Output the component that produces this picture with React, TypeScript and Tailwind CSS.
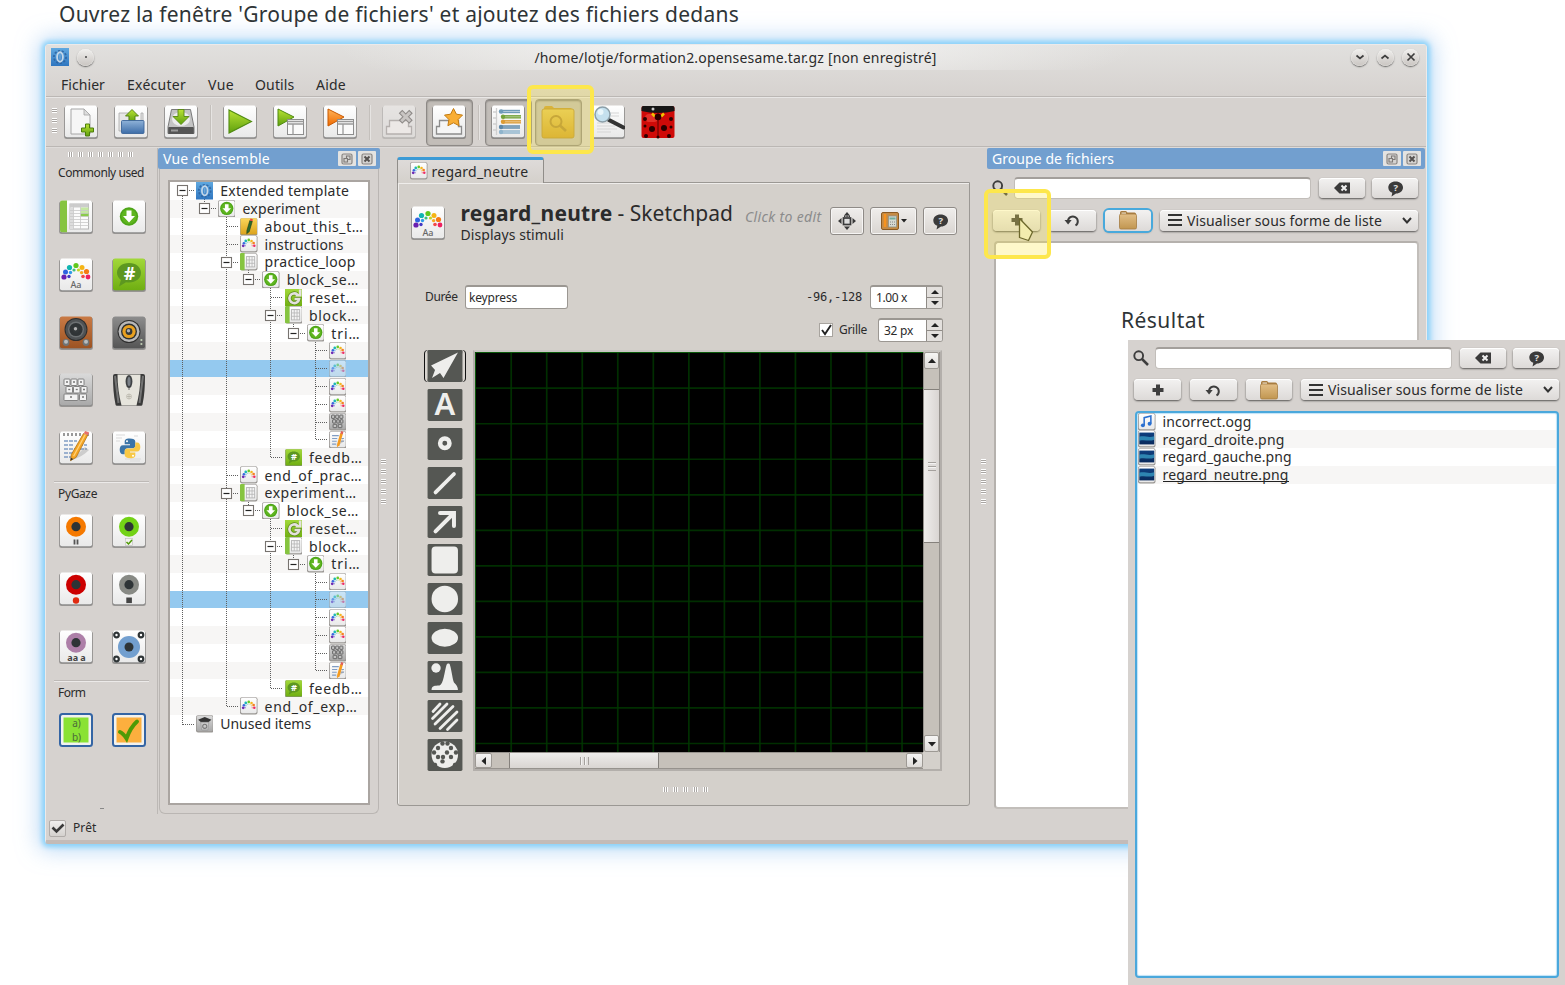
import React from "react";

/* ---------- shared gradients ---------- */

function Gradients() {
  const g = (id: string, a: string, b: string) => (
    <linearGradient id={id} x1="0" y1="0" x2="0" y2="1">
      <stop offset="0" stopColor={a} />
      <stop offset="1" stopColor={b} />
    </linearGradient>
  );
  return (
    <svg className="absolute h-0 w-0" aria-hidden="true">
      <defs>
        {g("tile", "#ffffff", "#e9e9e9")}
        {g("green", "#b9e334", "#5fa00e")}
        {g("lime", "#a2d83a", "#6fae12")}
        {g("orange", "#ffb35a", "#ef6a00")}
        {g("folder", "#e2be86", "#c19650")}
        {g("blue", "#8fb2d8", "#3d6da8")}
        {g("wood", "#c97a45", "#9c5322")}
        {g("metal", "#8d8d8d", "#555555")}
        {g("keys", "#dadada", "#a9a9a9")}
        {g("yfold", "#e3c557", "#cfa02a")}
        {g("azure", "#5fa8e0", "#2f76c0")}
        {g("photo", "#0f3f7f", "#0a2a5c")}
        {g("note", "#fbd65a", "#dba21c")}
      </defs>
    </svg>
  );
}

type IconProps = { className?: string; children?: React.ReactNode };

function Icon({ className = "h-[34px] w-[34px]", children }: IconProps) {
  return (
    <svg viewBox="0 0 34 34" className={"shrink-0 " + className}>
      {children}
    </svg>
  );
}

function Base({ fill = "url(#tile)", small }: { fill?: string; small?: boolean }) {
  if (small) {
    return (
      <>
        <rect x="0" y="0.5" width="34" height="33.5" rx="4" fill="#9a9794" />
        <rect x="1.6" y="1.4" width="30.8" height="30" rx="3" fill={fill} />
      </>
    );
  }
  return (
    <>
      <rect x="0.1" y="1.2" width="33.8" height="32.8" rx="2.5" fill="#000" opacity="0.28" />
      <rect x="0.7" y="1" width="32.6" height="32.2" rx="2" fill="#8b8b8b" />
      <rect x="1" y="0.6" width="32" height="31.6" rx="2" fill={fill} />
    </>
  );
}

/* ---------- item icons ---------- */

const dots: [number, number, number, string][] = [
  [5, 19, 2.6, "#6a1fb0"], [6.5, 14, 2.5, "#2f62e0"], [10.5, 9.5, 2.6, "#10b5b0"],
  [17, 7.5, 2.6, "#62c81c"], [23, 9.5, 2.5, "#f5b414"], [27.5, 13.5, 2.6, "#f57a14"],
  [29, 19, 2.4, "#ee2060"], [10, 18.5, 1.7, "#4238c4"], [11.5, 14.5, 1.7, "#2f9be8"],
  [15, 12, 1.6, "#3fc080"], [19.5, 12, 1.6, "#c6d420"], [22.6, 14.6, 1.7, "#f8a820"],
  [24, 18.5, 1.8, "#f04848"],
];

function Sketch({ className, small, faded }: { className?: string; small?: boolean; faded?: boolean }) {
  return (
    <Icon className={className}>
      <Base small={small} />
      {small ? (
        <g opacity="0.95">
          {dots.slice(0, 7).map(([x, y, r, c], i) => (
            <circle key={i} cx={x + (17 - x) * 0.1} cy={y + 2} r={r} fill={c} />
          ))}
          {dots.slice(7).map(([x, y, r, c], i) => (
            <circle key={i} cx={x} cy={y + 2} r={r} fill={c} opacity="0.45" />
          ))}
        </g>
      ) : (
        <>
          {dots.map(([x, y, r, c], i) => (
            <circle key={i} cx={x} cy={y} r={r} fill={c} />
          ))}
          <text x="17" y="29.5" textAnchor="middle" fontSize="9" fontWeight="500" fontFamily="Noto Sans" fill="#666">Aa</text>
        </>
      )}
      {faded && <rect x="0" y="0" width="34" height="34" rx="2" fill="#94c9ef" opacity="0.5" />}
    </Icon>
  );
}

function Loop({ className, small }: { className?: string; small?: boolean }) {
  return (
    <Icon className={className}>
      <Base small={small} />
      <path d={small ? "M3 0h6v33.500h-6a3 3 0 0 1-3-2v-29.500a3 3 0 0 1 3-2z" : "M3 0.6h5v31.6h-5a2 2 0 0 1-2-2v-27.6a2 2 0 0 1 2-2z"} fill="#86c440" />
      {small ? (
        <g>
          <rect x="12.500" y="7" width="16" height="20" fill="#f4f4f4" stroke="#b5b5b5" strokeWidth="1.800" />
          <path d="M12.500 13.500h16M12.500 20h16M18 7v20M23.400 7v20" stroke="#b5b5b5" strokeWidth="1.600" />
        </g>
      ) : (
        <g>
          <rect x="11" y="4" width="18.5" height="25" fill="#fbfbfb" stroke="#b5b5b5" strokeWidth="1" />
          <path d="M11 4h18.5v3.5h-18.5z" fill="#ccc" />
          <path d="M21.5 7.5h8v9h-8z" fill="#c5e8a2" />
          <path d="M21.5 13h8v3.5h-8z" fill="#8acb4c" />
          <path d="M11 7.5h3.500v21.500h-3.500z" fill="#ddd" />
          <path d="M11 10.500h18.500M11 13.500h18.500M11 16.500h18.500M11 19.500h18.500M11 22.500h18.500M11 25.500h18.500M14.500 4v25M21.500 4v25" stroke="#c9c9c9" strokeWidth="0.8" />
        </g>
      )}
    </Icon>
  );
}

function Sequence({ className, small }: { className?: string; small?: boolean }) {
  return (
    <Icon className={className}>
      <Base small={small} />
      <g transform={small ? "translate(17 16.5) scale(1.4) translate(-17 -16.5)" : undefined}>
        <circle cx="17" cy="16.5" r="9.2" fill="#4da518" />
        <circle cx="17" cy="16.500" r="7.600" fill="#5fb51f" />
        <path d="M14.500 10.500h5v5.500h3.500l-6 6.500-6-6.500h3.500z" fill="#fff" />
      </g>
    </Icon>
  );
}

function Feedback({ className }: { className?: string }) {
  return (
    <Icon className={className}>
      <Base fill="url(#lime)" />
      <path d="M17 5c7 0 12 4.200 12 9.800s-5 9.700-12 9.700c-1 0-2 0-3-.3l-7 4.300 2-6.500c-2.500-1.800-4-4.300-4-7.200 0-5.600 5-9.800 12-9.800z" fill="#5d9720" />
      <text x="17.500" y="21.500" textAnchor="middle" fontSize="18" fontWeight="bold" fontFamily="Noto Sans" fill="#fff">#</text>
    </Icon>
  );
}

function Speaker({ fill, cone, knobs }: { fill: string; cone: string; knobs?: boolean }) {
  const cy = knobs ? 13.5 : 15.5;
  return (
    <Icon>
      <Base fill={fill} />
      <circle cx="17" cy={cy} r="11.500" fill="#2e2e2e" />
      <circle cx="17" cy={cy} r="10.500" fill={knobs ? "#4f5254" : "#b9b9b9"} />
      <circle cx="17" cy={cy} r="8" fill={knobs ? "#6c7072" : "#2c3033"} />
      <circle cx="17" cy={cy} r="6.600" fill={cone} />
      <circle cx="17" cy={cy} r="3.400" fill="#34383a" />
      <circle cx="16.500" cy={cy - 0.8} r="1.700" fill="#b0b0b0" />
      {knobs && (
        <>
          <circle cx="7" cy="26.500" r="3.400" fill="#6f7375" />
          <circle cx="27" cy="26.500" r="3.400" fill="#6f7375" />
          <circle cx="7" cy="25.800" r="2" fill="#b9bcbd" />
          <circle cx="27" cy="25.800" r="2" fill="#b9bcbd" />
        </>
      )}
      {!knobs && <path d="M28.500 24h1.800M28.500 28h1.800" stroke="#d8e8c8" strokeWidth="1.500" />}
    </Icon>
  );
}

function Keyboard({ className, small }: { className?: string; small?: boolean }) {
  const keys: [number, number, number][] = small
    ? [[5, 4, 6], [13, 4, 6], [21, 4, 6], [7, 13, 6], [15, 13, 5], [22, 13, 5], [8, 22, 7], [18, 22, 7]]
    : [[5, 6, 6], [12, 6, 6], [19, 6, 6], [7, 13.500, 6.500], [14.500, 13.500, 6.500], [22, 13.500, 6], [5, 21, 14], [20.500, 21, 7]];
  return (
    <Icon className={className}>
      <Base fill="url(#keys)" small={small} />
      {keys.map(([x, y, w], i) => (
        <g key={i}>
          <rect x={x} y={y} width={w} height="6.500" rx="0.800" fill={small ? "#c2c2c2" : "#f3f3f3"} stroke={small ? "#5c5c5c" : "#777"} strokeWidth={small ? 1.700 : 0.900} />
          {!small && <path d={`M${x + w / 2 - 1} ${y + 3}h2`} stroke="#777" strokeWidth="1.300" />}
        </g>
      ))}
    </Icon>
  );
}

function Mouse() {
  return (
    <Icon>
      <path d="M1 3a2 2 0 0 1 2-2h28a2 2 0 0 1 2 2c0 10-.5 19-2.500 28.500a1.500 1.500 0 0 1-1.500 1.200h-24a1.500 1.500 0 0 1-1.500-1.200c-2-9.500-2.500-18.500-2.500-28.500z" fill="#3a3a3a" />
      <path d="M3 3l3.500 27M31 3l-3.500 27" stroke="#747474" strokeWidth="2" />
      <path d="M5.500 1.500h23c0 11-1.500 21-4 31h-15c-2.500-10-4-20-4-31z" fill="#e6e4dc" />
      <ellipse cx="17" cy="8.500" rx="3.400" ry="6.600" fill="#3f4244" />
      <ellipse cx="17" cy="8.500" rx="1.600" ry="4.500" fill="#7b8188" />
      <path d="M17 15v2" stroke="#666" />
      <circle cx="17" cy="23.500" r="2.500" fill="none" stroke="#c4c1b6" />
      <path d="M15 23.500h4M17 21v5" stroke="#b4b1a6" strokeWidth="0.800" />
    </Icon>
  );
}

function Pencil({ className, small }: { className?: string; small?: boolean }) {
  return (
    <Icon className={className}>
      <Base small={small} />
      {!small && <path d="M5 2v3M9 2v3M13 2v3M17 2v3M21 2v3M29 2v3" stroke="#999" strokeWidth="2" />}
      <path d={small ? "M6 9h13M6 14.500h10M6 20h9M6 25.500h8M24 14.500h5M23 20h6" : "M5 10h13M5 14h10M5 18h15M5 22h9M5 26h8M20 14h8M21 18h7"} stroke="#7f9cc4" strokeWidth={small ? 2.200 : 1.700} strokeDasharray={small ? undefined : "4 1"} />
      <path d="M13 29c6-2 12-5 17-10l-4-3z" fill="#999" opacity="0.400" />
      {small ? (
        <>
          <path d="M22 4l5 1.500-6.500 22-5 4 .5-6.500z" fill="#f59a1e" />
          <path d="M22 5l1.500-5 4.500 1.500-1.200 5z" fill="#e0605a" />
        </>
      ) : (
        <>
          <path d="M24.500 2.500l4.200 1.800-11.500 22-5.700 3.400.8-6.200z" fill="#f5a524" stroke="#a86a10" strokeWidth="0.700" />
          <path d="M26.400 3.200l-11.800 22" stroke="#ffd27a" strokeWidth="1.300" />
          <path d="M24.800 2.200l1.400-2.200 4 1.600-1.300 2.700z" fill="#e8706a" />
          <path d="M11.500 29.700l.4-3 2.300 1.300z" fill="#333" />
        </>
      )}
    </Icon>
  );
}

function Python() {
  return (
    <Icon>
      <Base />
      <path d="M4 4h9M4 7h6M4 10h4M22 5h4M13 28h16M18 30h10" stroke="#d9d9d9" strokeWidth="1.200" />
      <path d="M16 7.500c-4 0-4.800 1.500-4.800 3.300v2.400h5.300v1h-7c-2.300 0-3.300 2-3.300 4.500s1.100 4.500 3.300 4.500h1.700v-2.700c0-2 1.300-3.200 3.200-3.200h5c1.600 0 2.400-1.300 2.400-2.600v-4c0-2-1.800-3.200-5.800-3.200z" fill="#3a74a8" transform="translate(1.500 0)" />
      <path d="M18 27.800c4 0 4.800-1.500 4.800-3.300v-2.400h-5.300v-1h7c2.300 0 3.300-2 3.300-4.500s-1.100-4.500-3.300-4.500h-1.700v2.700c0 2-1.300 3.200-3.200 3.200h-5c-1.600 0-2.400 1.300-2.400 2.600v4c0 2 1.800 3.200 5.800 3.200z" fill="#f8c846" transform="translate(0.500 -0.500)" />
      <circle cx="15" cy="10.300" r="1" fill="#fff" />
      <circle cx="21" cy="24.800" r="1" fill="#fff" />
    </Icon>
  );
}

function Eye({ color, mark }: { color: string; mark: React.ReactNode }) {
  return (
    <Icon>
      <Base />
      <circle cx="17" cy="12.700" r="10" fill={color} />
      <circle cx="17" cy="12.700" r="4.600" fill="#2e3436" />
      {mark}
    </Icon>
  );
}

function Calibrate() {
  return (
    <Icon>
      <Base />
      <circle cx="17" cy="17" r="11" fill="#729fcf" />
      <circle cx="17" cy="17" r="4.500" fill="#2e3436" />
      {[[4.500, 5], [29, 5], [4.500, 29], [29, 29]].map(([x, y]) => (
        <circle key={`${x}-${y}`} cx={x} cy={y} r="2.300" fill="#fff" stroke="#2e3436" strokeWidth="2.200" />
      ))}
    </Icon>
  );
}

function FormTile({ kind }: { kind: "text" | "check" }) {
  return (
    <Icon>
      <rect x="1" y="1" width="32" height="32" rx="2.500" fill="#f2f2ee" stroke="#3465a4" strokeWidth="2" />
      <rect x="4.500" y="4.500" width="25" height="25" fill={kind === "text" ? "#8ae234" : "#fcaf3e"} />
      {kind === "text" ? (
        <g fontSize="10" fontFamily="Noto Sans" fill="#4a6a3a" textAnchor="middle">
          <text x="17.500" y="14">a)</text>
          <text x="17.500" y="27.500">b)</text>
        </g>
      ) : (
        <path d="M8 19c2.500 1 4.500 3.500 6.500 6.500 2.500-7 6-13 10.500-17" fill="none" stroke="#4e9a06" strokeWidth="4" strokeLinecap="round" />
      )}
    </Icon>
  );
}

function Logo({ className }: { className?: string }) {
  return (
    <Icon className={className}>
      <rect width="34" height="34" fill="url(#azure)" />
      <circle cx="17" cy="17" r="11.500" fill="none" stroke="#2a5f9c" strokeWidth="3.500" strokeDasharray="4 3" opacity="0.800" />
      <ellipse cx="17" cy="17" rx="5.500" ry="9" fill="none" stroke="#c3d6e8" strokeWidth="3.400" />
      <path d="M17 12v10" stroke="#8fb4d8" strokeWidth="1.600" />
    </Icon>
  );
}

function NoteIcon({ className }: { className?: string }) {
  return (
    <Icon className={className}>
      <Base fill="url(#note)" />
      <path d="M19 5l5 1.500-6 20-5 4 .5-6.500z" fill="#2d6a2c" stroke="#14351a" strokeWidth="1" />
      <path d="M19 5l1.500-4 4.500 1.500-1 4z" fill="#e44" />
    </Icon>
  );
}

function Inline({ className }: { className?: string }) {
  return (
    <Icon className={className}>
      <rect width="34" height="34" fill="url(#lime)" />
      <path d="M24 10.500a9.500 9.500 0 1 0 3.500 9h-9" fill="none" stroke="#5d8a1c" strokeWidth="8" />
      <path d="M24 10.500a9.500 9.500 0 1 0 3.500 9h-9M29.500 1v11h-9" fill="none" stroke="#e4e1de" strokeWidth="5" />
    </Icon>
  );
}

function Trash({ className }: { className?: string }) {
  return (
    <Icon className={className}>
      <Base fill="url(#keys)" small />
      <path d="M4 9l13-5 13 5-6 5h-14z" fill="#333" />
      <path d="M9 14h16l-2 15h-12z" fill="#c8c8c8" stroke="#888" />
      <circle cx="17" cy="22" r="4" fill="none" stroke="#777" strokeWidth="2" />
    </Icon>
  );
}

/* ---------- toolbar icons ---------- */

const toolIcons: Record<string, React.ReactNode> = {
  new: (
    <>
      <path d="M7 4h13l6 6v19h-19z" fill="#f6f6f6" stroke="#a6a6a6" strokeWidth="1" />
      <path d="M20 4l6 6h-6z" fill="#ddd" stroke="#a6a6a6" strokeWidth="0.800" />
      <path d="M21.500 19h4v4h4v4h-4v4h-4v-4h-4v-4h4z" fill="url(#green)" stroke="#4c7d0c" strokeWidth="1" />
    </>
  ),
  open: (
    <>
      <path d="M5 8h10v8h14v-8h-2v18h-22z" fill="#e6e6e6" stroke="#a8a8a8" strokeWidth="0.800" />
      <path d="M18 4.500l6.500 6.500h-3.500v6h-6v-6h-3.500z" fill="url(#green)" stroke="#4c7d0c" strokeWidth="0.900" />
      <rect x="7.500" y="15.500" width="22.500" height="13" rx="1" fill="url(#blue)" stroke="#3c659a" strokeWidth="0.900" />
    </>
  ),
  save: (
    <>
      <path d="M7.500 4.500h19l3.500 17.500v6.500h-26v-6.500z" fill="#c4c4c4" stroke="#7a7a7a" strokeWidth="1" />
      <ellipse cx="17" cy="14" rx="9" ry="7" fill="#ededed" />
      <rect x="4.200" y="22" width="25.600" height="7" rx="1" fill="#555" />
      <path d="M7 25.500h7" stroke="#999" strokeWidth="2" />
      <path d="M14 4.500h6v7h5l-8 8-8-8h5z" fill="url(#green)" stroke="#55870f" strokeWidth="0.900" />
    </>
  ),
  run: <path d="M6 5l22.500 11.500-22.500 11.500z" fill="url(#green)" stroke="#4f8a10" strokeWidth="1.100" />,
  runWin: (
    <>
      <path d="M5 4l16 8-16 9z" fill="url(#green)" stroke="#4f8a10" strokeWidth="1" />
      <rect x="14.500" y="14.500" width="16" height="15" fill="#fafafa" stroke="#8d8d8d" />
      <path d="M14.500 16.500h16M14.500 19h16M20 19v10.500" stroke="#9a9a9a" strokeWidth="1.300" />
    </>
  ),
  quick: (
    <>
      <path d="M5 4l16 8-16 9z" fill="url(#orange)" stroke="#c85800" strokeWidth="1" />
      <rect x="14.500" y="14.500" width="16" height="15" fill="#fafafa" stroke="#8d8d8d" />
      <path d="M14.500 16.500h16M14.500 19h16M20 19v10.500" stroke="#9a9a9a" strokeWidth="1.300" />
    </>
  ),
  stamp: (
    <>
      <path d="M7.500 21.500v-6h19v6h3v7.500h-25v-7.500z" fill="#ece8e6" stroke="#b5b0ae" strokeWidth="1.300" />
      <path d="M18.500 6.500l10.500 10.500M29 6.500l-10.500 10.500" stroke="#8e8a88" strokeWidth="5" />
      <path d="M19.300 7.300l8.900 8.900M28.200 7.300l-8.900 8.900" stroke="#c9c5c3" strokeWidth="3" />
    </>
  ),
  star: (
    <>
      <path d="M7.500 21.500v-6h19v6h3v7.500h-25v-7.500z" fill="#f5f5f5" stroke="#8c8c8c" strokeWidth="1.300" />
      <path d="M21.500 3.500l2.900 5.700 6.100.9-4.400 4.400 1 6.200-5.600-2.900-5.600 2.900 1-6.200-4.400-4.400 6.100-.9z" fill="#f9ae35" stroke="#c27a10" strokeWidth="1" />
    </>
  ),
  list: (
    <>
      <path d="M5.500 3v27M2 7h3M2 13h3M2 19h3M2 25h3" stroke="#cfcfcf" strokeWidth="1.300" />
      {([["#6f9bb8", 6.5, 10, 19], ["#74a33a", 11.8, 12, 18], ["#dc9b34", 16.800, 12, 18], ["#5d88a8", 22, 10, 19], ["#8fb4cc", 27, 10, 19]] as [string, number, number, number][]).map(([c, y, x, w]) => (
        <g key={y}>
          <path d={`M${x} ${y}h${w}`} stroke={c} strokeWidth="3.400" />
          <path d={`M${x} ${y}h${w}`} stroke="#fff" strokeWidth="1" opacity="0.450" />
          <circle cx={x} cy={y} r="2.200" fill={c} />
        </g>
      ))}
    </>
  ),
  find: (
    <>
      <path d="M6 18h20M6 21h18M6 24h20M6 27h14M18 8h10M20 11h8" stroke="#d6d6d6" strokeWidth="1.200" />
      <path d="M18 15l14.500 7.500" stroke="#333" strokeWidth="4" strokeLinecap="round" />
      <circle cx="11.500" cy="9.500" r="7.500" fill="#c4e0ee" stroke="#8c9fa8" strokeWidth="1.500" />
      <circle cx="9.500" cy="7" r="3" fill="#e9f6fb" />
    </>
  ),
};

function ToolIcon({ name }: { name: string }) {
  if (name === "folder") {
    return (
      <Icon>
        <path d="M3 3a2 2 0 0 1 2-2h6l2 2h16a2 2 0 0 1 2 2v6h-28z" fill="#cb9d31" />
        <rect x="1" y="4" width="32" height="29" rx="2" fill="url(#yfold)" stroke="#b58e30" strokeWidth="0.900" />
        <circle cx="15" cy="16.500" r="5.500" fill="none" stroke="#b18b30" strokeWidth="2" />
        <path d="M19 20.500l6 5.500" stroke="#b18b30" strokeWidth="2.600" />
      </Icon>
    );
  }
  if (name === "bug") {
    return (
      <Icon>
        <rect x="0.500" y="1" width="33" height="32" rx="2" fill="#cf0a08" />
        <rect x="4" y="9" width="13" height="8" rx="4" fill="#f04a40" opacity="0.600" />
        <path d="M.5 3a2 2 0 0 1 2-2h29a2 2 0 0 1 2 2v3c-10 2.500-23 2.500-33 0z" fill="#161616" />
        <path d="M17 7v26" stroke="#5a0000" strokeWidth="1" />
        <path d="M11 8.500l3 3M23 8.500l-3 3" stroke="#f3c400" strokeWidth="2.500" />
        {[[17, 12, 3.300], [11, 24, 3], [23, 23, 3], [4, 14, 2], [30, 14, 2], [5, 31, 2], [28, 31, 2], [4, 21, 1.500], [30, 22, 1.500], [17, 32, 1.500]].map(([x, y, r], i) => (
          <circle key={i} cx={x} cy={y} r={r} fill="#2c0000" />
        ))}
        <circle cx="12" cy="4" r="1.500" fill="#ccc" />
      </Icon>
    );
  }
  return (
    <Icon>
      <g opacity={name === "stamp" ? 0.400 : 1}>
        <Base />
      </g>
      {toolIcons[name]}
    </Icon>
  );
}

function Tool({ name, pressed }: { name: string; pressed?: boolean }) {
  return (
    <div
      className={
        "flex h-[47px] w-[47px] shrink-0 items-center justify-center rounded-[4px] " +
        (pressed ? "border border-[#8d8986] bg-[#c2bdb8] shadow-[inset_0_1px_2px_rgba(0,0,0,0.35)]" : "")
      }
    >
      <ToolIcon name={name} />
    </div>
  );
}

function ToolSep() {
  return (
    <div className="flex w-[6px] shrink-0 justify-center">
      <div className="h-[35px] w-[2px] border-l border-[#c4c0bc] bg-[#e6e4e2]" />
    </div>
  );
}

/* ---------- small parts ---------- */

function Grip({ vertical, className = "" }: { vertical?: boolean; className?: string }) {
  return vertical ? (
    <div className={"w-[5px] bg-[repeating-linear-gradient(180deg,#fff_0_1px,#a9a5a2_1px_2px,#fff_2px_3px,#a9a5a2_3px_4px,#fff_4px_5px,#d6d2cf_5px_10px)] " + className} />
  ) : (
    <div className={"h-[5px] bg-[repeating-linear-gradient(90deg,#fff_0_1px,#a9a5a2_1px_2px,#fff_2px_3px,#a9a5a2_3px_4px,#fff_4px_5px,#d6d2cf_5px_10px)] " + className} />
  );
}

function RoundButton({ d, dot }: { d?: string; dot?: boolean }) {
  return (
    <div className="flex h-[17px] w-[17px] items-center justify-center rounded-full bg-linear-to-b from-[#f1f0ee] to-[#c9c5c1] shadow-[0_1px_1.500px_rgba(0,0,0,0.55),inset_0_0_1px_#fff]">
      <svg viewBox="0 0 12 12" className="h-[12px] w-[12px]">
        {dot ? <circle cx="6" cy="6" r="1" fill="#444" /> : <path d={d} fill="none" stroke="#3d3d3d" strokeWidth="1.700" />}
      </svg>
    </div>
  );
}

function DockButton({ close }: { close?: boolean }) {
  return (
    <div className="flex h-[15px] w-[18px] items-center justify-center rounded-[1px] bg-[#e4e3e1]">
      <svg viewBox="0 0 12 12" className="h-[12px] w-[12px]">
        <rect x="1" y="1" width="10" height="10" rx="1.500" fill="#d5d3d1" stroke="#8a8683" strokeWidth="1.200" />
        {close ? (
          <path d="M3.500 3.500l5 5M8.500 3.500l-5 5" stroke="#55514f" strokeWidth="2" />
        ) : (
          <path d="M3 5.500h3.500v3.500h-3.500zM5.500 5v-2h3.500v3.500h-2" fill="none" stroke="#7d7976" strokeWidth="1.100" />
        )}
      </svg>
    </div>
  );
}

function DockTitle({ children }: { children: React.ReactNode }) {
  return (
    <div className="flex h-[21px] shrink-0 items-center justify-between rounded-[2px] bg-[#729fcf] pr-[4px] pl-[5px] text-white">
      {children}
      <div className="flex gap-[2px]">
        <DockButton />
        <DockButton close />
      </div>
    </div>
  );
}

function PushButton({ className = "", children, focus }: { className?: string; children: React.ReactNode; focus?: boolean }) {
  return (
    <div
      className={
        "flex items-center justify-center rounded-[4px] bg-linear-to-b from-[#f3f2f1] to-[#dddad8] " +
        (focus
          ? "shadow-[0_0_0_2px_#48a9dc,0_1px_2px_1px_rgba(0,0,0,0.3)] "
          : "shadow-[0_1px_2px_rgba(0,0,0,0.6),inset_0_1px_0_#fff] ") +
        className
      }
    >
      {children}
    </div>
  );
}

function HelpBubble() {
  return (
    <svg viewBox="0 0 18 18" className="h-[18px] w-[18px]">
      <path d="M9.500 2.500c4.500 0 7.500 2.600 7.500 6s-3 6-7 6l-4.500 3 .8-3.700c-2.500-1-4-2.900-4-5.300 0-3.400 3-6 7.200-6z" fill="#3b3b3b" />
      <text x="9.700" y="12" textAnchor="middle" fontSize="9.500" fontWeight="bold" fontFamily="Noto Sans" fill="#e0e0e0">?</text>
    </svg>
  );
}

function FolderGlyph() {
  return (
    <svg viewBox="0 0 20 20" className="h-[20px] w-[20px]">
      <path d="M2 2.500a1.500 1.500 0 0 1 1.500-1.500h4.500l1.500 1.500h7a1.500 1.500 0 0 1 1.500 1.500v3h-16z" fill="#a97d40" />
      <path d="M3.500 2.500h4.500v3h-4.500z" fill="#efe3cc" />
      <rect x="1.500" y="4" width="17" height="15" rx="1.500" fill="url(#folder)" stroke="#a57c42" strokeWidth="0.800" />
    </svg>
  );
}

/* ---------- overview tree ---------- */

type Kind = "logo" | "seq" | "note" | "sketch" | "loop" | "inline" | "keys" | "pencil" | "feedback" | "trash";
type Row = { level: number; kind: Kind; text?: string; track?: string; open?: boolean; selected?: boolean };

const block = (): Row[] => [
  { level: 3, kind: "seq", text: "block_se…", track: "tracking-[0.580px]", open: true },
  { level: 4, kind: "inline", text: "reset…", track: "tracking-[0.730px]" },
  { level: 4, kind: "loop", text: "block…", track: "tracking-[0.670px]", open: true },
  { level: 5, kind: "seq", text: "tri…", track: "tracking-[0.990px]", open: true },
  { level: 6, kind: "sketch" },
  { level: 6, kind: "sketch", selected: true },
  { level: 6, kind: "sketch" },
  { level: 6, kind: "sketch" },
  { level: 6, kind: "keys" },
  { level: 6, kind: "pencil" },
  { level: 4, kind: "feedback", text: "feedb…", track: "tracking-[0.760px]" },
];

const rows: Row[] = [
  { level: 0, kind: "logo", text: "Extended template", track: "tracking-[0.258px]", open: true },
  { level: 1, kind: "seq", text: "experiment", track: "tracking-[0.240px]", open: true },
  { level: 2, kind: "note", text: "about_this_t…", track: "tracking-[0.590px]" },
  { level: 2, kind: "sketch", text: "instructions", track: "tracking-[0.110px]" },
  { level: 2, kind: "loop", text: "practice_loop", track: "tracking-[0.280px]", open: true },
  ...block(),
  { level: 2, kind: "sketch", text: "end_of_prac…", track: "tracking-[0.570px]" },
  { level: 2, kind: "loop", text: "experiment…", track: "tracking-[0.480px]", open: true },
  ...block(),
  { level: 2, kind: "sketch", text: "end_of_exp…", track: "tracking-[0.670px]" },
  { level: 0, kind: "trash", text: "Unused items", track: "tracking-[0.020px]" },
];

const ROW = 17.78;
const STEP = 22.2;

function RowIcon({ kind, selected }: { kind: Kind; selected?: boolean }) {
  const c = "h-[17.500px] w-[17.500px]";
  switch (kind) {
    case "logo": return <Logo className={c} />;
    case "seq": return <Sequence className={c} small />;
    case "note": return <NoteIcon className={c} />;
    case "loop": return <Loop className={c} small />;
    case "inline": return <Inline className={c} />;
    case "keys": return <Keyboard className={c} small />;
    case "pencil": return <Pencil className={c} small />;
    case "feedback": return <Feedback className={c} />;
    case "trash": return <Trash className={c} />;
    default: return <Sketch className={c} small faded={selected} />;
  }
}

function Branches() {
  const x = (l: number) => Math.round(11.5 + l * STEP) + 0.5;
  const y = (r: number) => Math.floor(8.9 + r * ROW) + 0.5;
  const trunks: [number, number, number][] = [
    [0, 0, 30], [1, 0.5, 1], [2, 1.5, 29], [3, 4.5, 5], [4, 5.5, 15], [5, 7.5, 8], [6, 8.5, 14],
    [3, 17.5, 18], [4, 18.5, 28], [5, 20.5, 21], [6, 21.5, 27],
  ];
  return (
    <svg className="absolute top-0 left-0 h-[560px] w-[198px]">
      <g stroke="#5e5e5e" strokeWidth="1" strokeDasharray="1 1" fill="none">
        {trunks.map(([l, a, b], i) => (
          <path key={i} d={`M${x(l)} ${y(a) - 0.5}V${y(b) + 0.5}`} />
        ))}
        {rows.map((r, i) => (
          <path key={i} d={`M${x(r.level) + 0.5} ${y(i)}h11`} />
        ))}
      </g>
      {rows.map((r, i) =>
        r.open ? (
          <g key={i}>
            <rect x={x(r.level) - 5} y={y(i) - 5} width="10" height="10" fill="#fff" stroke="#77736f" strokeWidth="1.100" />
            <path d={`M${x(r.level) - 3} ${y(i)}h6`} stroke="#222" strokeWidth="1.200" />
          </g>
        ) : null
      )}
    </svg>
  );
}

function Overview() {
  return (
    <div className="flex w-[222px] shrink-0 flex-col">
      <DockTitle>
        <span className="tracking-[0.230px]">Vue d'ensemble</span>
      </DockTitle>
      <div className="mr-[1px] ml-[1px] flex h-[646px] flex-col rounded-b-[6px] border border-t-0 border-[#bab6b3] px-[8px] pt-[11px] pb-[8px]">
        <div className="relative flex-1 overflow-hidden border-2 border-[#aaa5a1] bg-white">
          {rows.map((r, i) => (
            <div
              key={i}
              className={"flex h-[17.780px] items-center gap-[7px] " + (r.selected ? "bg-[#94c9ef]" : i % 2 ? "bg-[#f7f6f5]" : "bg-white")}
              style={{ paddingLeft: 25.7 + r.level * STEP }}
            >
              <div className="z-10 flex shrink-0">
                <RowIcon kind={r.kind} selected={r.selected} />
              </div>
              {r.text && <span className={"leading-[17px] whitespace-nowrap " + (r.track ?? "")}>{r.text}</span>}
            </div>
          ))}
          <Branches />
        </div>
      </div>
    </div>
  );
}

/* ---------- item palette ---------- */

function PaletteGrid({ children, className = "" }: { children: React.ReactNode; className?: string }) {
  return <div className={"grid grid-cols-[34px_34px] gap-x-[19.500px] gap-y-[23.800px] pl-[12.500px] " + className}>{children}</div>;
}

function PaletteLine() {
  return <div className="mx-[8px] h-[2px] border-t border-[#bdb9b6] bg-[#eceae9]" />;
}

function Palette() {
  return (
    <div className="flex w-[112px] shrink-0 flex-col border-r border-[#bcb8b5] text-[12px]">
      <div className="flex h-[12px] justify-center">
        <Grip className="mt-[4px] mr-[2px] w-[66px]" />
      </div>
      <span className="mt-[4px] ml-[12px] leading-[17px] tracking-[-0.430px]">Commonly used</span>
      <PaletteGrid className="mt-[19px]">
        <Loop />
        <Sequence />
        <Sketch />
        <Feedback />
        <Speaker fill="url(#wood)" cone="#303436" knobs />
        <Speaker fill="url(#metal)" cone="#e8a020" />
        <Keyboard />
        <Mouse />
        <Pencil />
        <Python />
      </PaletteGrid>
      <div className="mt-[16.300px]"><PaletteLine /></div>
      <span className="mt-[2px] ml-[12px] leading-[17px] tracking-[-0.370px]">PyGaze</span>
      <PaletteGrid className="mt-[11.500px]">
        <Eye color="#f57900" mark={<path d="M15.500 25.500v5M18.500 25.500v5" stroke="#555" strokeWidth="1.800" />} />
        <Eye
          color="#73d216"
          mark={
            <>
              <rect x="13.500" y="24.500" width="7" height="7" fill="#f2f2ee" stroke="#bbb" strokeWidth="0.600" />
              <path d="M14.500 28l2 2 3.500-4" fill="none" stroke="#4e9a06" strokeWidth="1.500" />
            </>
          }
        />
        <Eye color="#cc0000" mark={<circle cx="17" cy="28.500" r="3.200" fill="#e02a10" />} />
        <Eye color="#888a85" mark={<rect x="14.300" y="25.500" width="5.600" height="5.600" fill="#444" />} />
        <Eye
          color="#ad7fa8"
          mark={<text x="17.500" y="30.500" textAnchor="middle" fontSize="9" fontWeight="bold" fontFamily="Noto Sans" fill="#444">aa a</text>}
        />
        <Calibrate />
      </PaletteGrid>
      <div className="mt-[16px]"><PaletteLine /></div>
      <span className="mt-[2px] ml-[12px] leading-[17px] tracking-[-0.540px]">Form</span>
      <PaletteGrid className="mt-[12.500px]">
        <FormTile kind="text" />
        <FormTile kind="check" />
      </PaletteGrid>
      <div className="mt-[61px] ml-[54px] h-[1px] w-[4px] bg-[#888]" />
    </div>
  );
}

/* ---------- sketchpad editor ---------- */

const sketchTools: React.ReactNode[] = [
  <path d="M31 2.500l-14.500 25.500-3.500-5-8 5 3-8-4-4.500z" fill="#eeeeec" />,
  <text x="17.800" y="26.500" textAnchor="middle" fontSize="31" fontWeight="600" fontFamily="Noto Sans" fill="#eeeeec">A</text>,
  <circle cx="17.800" cy="15.300" r="4.700" fill="none" stroke="#eeeeec" strokeWidth="4.500" />,
  <path d="M8.500 25.500l18.500-18.500" stroke="#eeeeec" strokeWidth="3.800" strokeLinecap="round" />,
  <path d="M8.500 25.500l17-17M13 7h14v13" fill="none" stroke="#eeeeec" strokeWidth="4" strokeLinecap="round" />,
  <rect x="4.500" y="2.500" width="26.500" height="27" rx="4" fill="#eeeeec" />,
  <circle cx="17.800" cy="16" r="13.300" fill="#eeeeec" />,
  <ellipse cx="17.800" cy="15.800" rx="13.300" ry="9" fill="#eeeeec" />,
  <>
    <circle cx="9" cy="7" r="4.700" fill="#eeeeec" />
    <path d="M4.500 29c0-4 3-4.500 8-4.500 4-1 5-14 7-20.500 1-2 3-2 3.500 0 2 7 2.500 14 4 17.500 2.500 2.500 4 4.500 4 7.500z" fill="#eeeeec" />
  </>,
  <path d="M6 11.500l7-7.500M5.500 18.500l14.500-14.500M8 24l18-17.500M13 28.500l17-16.500M20.500 29.500l9.500-9.500" stroke="#eeeeec" strokeWidth="2.800" strokeLinecap="round" />,
  <>
    <circle cx="17.800" cy="15.700" r="13.300" fill="#eeeeec" />
    {[[15.500, 4.500], [20.500, 4.500], [11, 9], [24, 9], [7, 13.500], [20, 13.500], [29, 13.500], [11, 18], [16, 18], [24, 18], [15.500, 22.500], [8, 26], [28, 26]].map(([x, y], i) => (
      <circle key={i} cx={x} cy={y} r="2.200" fill="#555753" />
    ))}
  </>,
];

function SpinBox({ value, className, track }: { value: string; className: string; track: string }) {
  return (
    <div className={"flex h-[24px] overflow-hidden rounded-[3px] border border-t-2 border-[#9b9792] bg-white " + className}>
      <div className={"flex flex-1 items-center pl-[5px] text-[12px] " + track}>{value}</div>
      <div className="flex w-[16px] flex-col border-l border-[#8f8b86] bg-[#e3e0dd]">
        <div className="flex flex-1 items-center justify-center border-b border-[#8f8b86]">
          <svg viewBox="0 0 8 4" className="h-[4px] w-[8px]"><path d="M0 4l4-4 4 4z" fill="#222" /></svg>
        </div>
        <div className="flex flex-1 items-center justify-center">
          <svg viewBox="0 0 8 4" className="h-[4px] w-[8px]"><path d="M0 0l4 4 4-4z" fill="#222" /></svg>
        </div>
      </div>
    </div>
  );
}

function FlatButton({ className, children }: { className: string; children: React.ReactNode }) {
  return (
    <div className={"flex h-[28px] items-center justify-center rounded-[3px] border border-[#8f8b87] bg-linear-to-b from-[#f0eeec] to-[#d9d5d1] shadow-[inset_0_0_0_1px_#f6f5f4] " + className}>
      {children}
    </div>
  );
}

function ScrollArrow({ d, className }: { d: string; className: string }) {
  return (
    <div className={"flex shrink-0 items-center justify-center rounded-[2px] border border-[#9d9994] bg-linear-to-b from-[#f6f5f4] to-[#dfdcd9] " + className}>
      <svg viewBox="0 0 8 8" className="h-[8px] w-[8px]"><path d={d} fill="#222" /></svg>
    </div>
  );
}

function CanvasGrid() {
  const lines = Array.from({ length: 12 }, (_, i) => 36.2 + i * 35.53);
  return (
    <svg className="block h-[400px] w-[448px] bg-black">
      <g stroke="#003600" strokeOpacity="0.850" strokeWidth="1.700">
        {lines.map((p) => <path key={p} d={`M${p} 0V400`} />)}
        {lines.slice(0, 11).map((p) => <path key={p} d={`M0 ${p}H448`} />)}
      </g>
      <path d="M0.500 400V0.500H448" fill="none" stroke="#0a5a0a" />
    </svg>
  );
}

function Editor() {
  return (
    <div className="flex w-[573px] shrink-0 flex-col pt-[9px]">
      <div className="z-10 flex h-[25px]">
        <div className="mb-[-1px] flex h-[26px] w-[147px] items-center gap-[4px] rounded-t-[3px] border-x border-t-[3px] border-x-[#908d89] border-t-[#3c9bd6] bg-linear-to-b from-[#dedbd9] to-[#d4d0cb] pb-[1px] pl-[12px]">
          <Sketch className="h-[17.500px] w-[17.500px]" small />
          <span className="tracking-[0.240px]">regard_neutre</span>
        </div>
      </div>
      <div className="flex h-[624px] flex-col rounded-b-[3px] border border-[#9b9894] bg-[#d4d0cb] pr-[12px] pl-[13px] shadow-[inset_1px_1px_0_#efedeb]">
        <div className="flex h-[75px] pt-[20px]">
          <Sketch className="mt-[3px] h-[34px] w-[34px]" />
          <div className="ml-[15.500px] flex flex-col">
            <div className="flex h-[22px] items-center text-[21px] whitespace-nowrap">
              <span className="font-bold tracking-[0.255px]">regard_neutre</span>
              <span className="ml-[5px] tracking-[0.040px]">- Sketchpad</span>
              <span className="mt-[4px] ml-[12px] text-[14px] tracking-[0.350px] text-[#8b8b8b] italic">Click to edit</span>
            </div>
            <span className="leading-[20px] tracking-[0.060px]">Displays stimuli</span>
          </div>
          <div className="mt-[4px] ml-auto flex gap-[6px]">
            <FlatButton className="w-[34px]">
              <svg viewBox="0 0 18 18" className="h-[18px] w-[18px]">
                <path d="M9 0l3 3.500h-6zM9 18l3-3.500h-6zM0 9l3.500-3v6zM18 9l-3.500-3v6z" fill="#3a3a3a" />
                <rect x="5.500" y="6" width="7" height="6.500" fill="#ddd" stroke="#3a3a3a" strokeWidth="1.700" />
                <path d="M6 4.300h1.500M8.300 4.300h1.500M10.500 4.300h1.500" stroke="#3a3a3a" strokeWidth="1.500" />
              </svg>
            </FlatButton>
            <FlatButton className="w-[47px] gap-[2px]">
              <svg viewBox="0 0 18 18" className="h-[18px] w-[18px]">
                <rect x="0.500" y="0.500" width="17" height="17" rx="1.500" fill="#c58b45" stroke="#8a5a22" />
                <path d="M4 2v13" stroke="#f7931e" strokeWidth="2.500" />
                <rect x="7.500" y="4" width="8" height="11" fill="#d6d9d3" stroke="#8f938a" strokeWidth="0.800" />
                <path d="M8.500 6.500h6" stroke="#6fae9c" strokeWidth="2" />
                <path d="M9 10h5M9 12.500h5" stroke="#888" strokeDasharray="1 1" />
              </svg>
              <svg viewBox="0 0 6 4" className="h-[4px] w-[6px]"><path d="M0 0h6l-3 3.500z" fill="#222" /></svg>
            </FlatButton>
            <FlatButton className="w-[34px]"><HelpBubble /></FlatButton>
          </div>
        </div>
        <div className="mt-[27px] flex h-[24px] items-center pr-[14px] pl-[14px] text-[12px]">
          <span className="w-[40px] tracking-[-0.380px]">Durée</span>
          <div className="flex h-[24px] w-[103px] items-center rounded-[3px] border border-t-2 border-[#9b9792] bg-white pl-[3px] tracking-[-0.170px]">keypress</div>
          <span className="mr-[8px] ml-auto font-['DejaVu_Sans_Mono'] tracking-[-0.230px]">-96,-128</span>
          <SpinBox value="1.00 x" className="w-[73px]" track="tracking-[-0.380px]" />
        </div>
        <div className="mt-[9px] flex h-[24px] items-center justify-end pr-[14px] text-[12px]">
          <div className="flex h-[14px] w-[14px] items-center justify-center border border-[#a8a49f] bg-white">
            <svg viewBox="0 0 12 12" className="h-[12px] w-[12px]"><path d="M2 6l3 4 6-9" fill="none" stroke="#222" strokeWidth="1.900" /></svg>
          </div>
          <span className="mr-[11px] ml-[6px] tracking-[-0.290px]">Grille</span>
          <SpinBox value="32 px" className="w-[65px]" track="tracking-[-0.260px]" />
        </div>
        <div className="mt-[8px] flex">
          <div className="ml-[14px] flex w-[48px] shrink-0 flex-col gap-[7px] pl-[2px]">
            {sketchTools.map((t, i) => (
              <div key={i} className={"h-[31.900px] w-[36px] " + (i === 0 ? "rounded-[4px] shadow-[-2px_0_0_#d8d4cf,-3px_0_0_#111,2px_0_0_#d8d4cf,3px_0_0_#111]" : "")}>
                <svg viewBox="0 0 36 32" className="block h-full w-full overflow-visible">
                  <rect x="0.500" width="35" height="32" rx="1.500" fill="#555753" />
                  {t}
                </svg>
              </div>
            ))}
          </div>
          <div className="grid h-[421px] w-[469px] shrink-0 grid-cols-[448px_17px] grid-rows-[400px_17px] border-2 border-[#b3afab] border-t-[#c9c6c2]">
            <CanvasGrid />
            <div className="flex flex-col border-x border-[#96928d] bg-[#c6c1ba]">
              <ScrollArrow d="M0 6l4-4.500 4 4.500z" className="h-[17px]" />
              <div className="mt-[20px] flex h-[154px] shrink-0 items-center justify-center border-y border-[#85817c] bg-linear-to-r from-[#efedeb] to-[#d9d5d2]">
                <div className="h-[9px] w-[8px] bg-[repeating-linear-gradient(180deg,#a5a19d_0_1px,#f4f3f2_1px_2px,#e0dddb_2px_4px)]" />
              </div>
              <ScrollArrow d="M0 2l4 4.500 4-4.500z" className="mt-auto h-[17px]" />
            </div>
            <div className="flex border-y border-[#96928d] bg-[#c6c1ba]">
              <ScrollArrow d="M6 0l-4.500 4 4.500 4z" className="w-[17px]" />
              <div className="ml-[17px] flex w-[150px] shrink-0 items-center justify-center border-x border-[#85817c] bg-linear-to-b from-[#efedeb] to-[#d9d5d2]">
                <div className="h-[8px] w-[9px] bg-[repeating-linear-gradient(90deg,#a5a19d_0_1px,#f4f3f2_1px_2px,#e0dddb_2px_4px)]" />
              </div>
              <ScrollArrow d="M2 0l4.500 4-4.500 4z" className="ml-auto w-[17px]" />
            </div>
          </div>
        </div>
        <div className="flex justify-center pt-[16px] pl-[2px]">
          <Grip className="w-[45px]" />
        </div>
      </div>
    </div>
  );
}

/* ---------- file pool ---------- */

type PoolFile = { name: string; music?: boolean; track: string; current?: boolean };

function PoolPanel({ focusFolder, files, className }: { focusFolder?: boolean; files?: PoolFile[]; className: string }) {
  return (
    <div className={"flex h-full flex-col pr-[6px] pl-[6px] " + className}>
      <div className="flex h-[22px] shrink-0 items-center">
        <svg viewBox="0 0 16 16" className="-ml-[1px] h-[16px] w-[16px]">
          <circle cx="5.700" cy="5.700" r="4.400" fill="none" stroke="#3d3d3d" strokeWidth="1.900" />
          <path d="M9 9l6 6" stroke="#3d3d3d" strokeWidth="2.500" />
        </svg>
        <div className="ml-[6px] h-[22px] w-[297px] rounded-[4px] border border-t-2 border-[#c2beba] border-t-[#a39f9b] bg-white" />
        <PushButton className="ml-[7.500px] h-[20px] w-[46px]">
          <svg viewBox="0 0 18 12" className="h-[12px] w-[18px]">
            <path d="M1 6l5.500-5.500h10.500v11h-10.500z" fill="#3b3b3b" />
            <path d="M8.500 3.500l5 5M13.500 3.500l-5 5" stroke="#f0f0f0" strokeWidth="2" />
          </svg>
        </PushButton>
        <PushButton className="ml-[7.500px] h-[20px] w-[46px]"><HelpBubble /></PushButton>
      </div>
      <div className="mt-[10px] flex h-[22px] shrink-0 items-center gap-[9px]">
        <PushButton className="h-[21px] w-[47px]">
          <svg viewBox="0 0 12 12" className="h-[12px] w-[12px]"><path d="M4 .5h4v3.500h3.500v4h-3.500v3.500h-4v-3.500h-3.500v-4h3.500z" fill="#3e3e3e" /></svg>
        </PushButton>
        <PushButton className="h-[21px] w-[46.500px]">
          <svg viewBox="0 0 16 14" className="h-[14px] w-[16px]">
            <path d="M4 8.500a4.900 4.900 0 1 1 7.500 4" fill="none" stroke="#3e3e3e" strokeWidth="2" />
            <path d="M.5 7h7.200l-3.600 4.500z" fill="#3e3e3e" />
          </svg>
        </PushButton>
        <PushButton className="h-[21px] w-[46.500px]" focus={focusFolder}><FolderGlyph /></PushButton>
        <PushButton className="h-[21px] w-[258px] !justify-start pl-[8px]">
          <div className="flex w-[14px] flex-col gap-[3px]">
            <div className="h-[2px] bg-[#333]" />
            <div className="h-[2px] bg-[#333]" />
            <div className="h-[2px] bg-[#333]" />
          </div>
          <span className="ml-[5px] tracking-[0.120px] whitespace-nowrap">Visualiser sous forme de liste</span>
          <svg viewBox="0 0 10 7" className="mr-[6px] ml-auto h-[7px] w-[10px]"><path d="M1 1l4 4.500 4-4.500" fill="none" stroke="#333" strokeWidth="2" /></svg>
        </PushButton>
      </div>
      <div
        className={
          "mt-[10px] mr-[0.500px] ml-[0.500px] flex-1 rounded-[4px] border-2 bg-white " +
          (files ? "border-[#4aa8dc] px-[1px] shadow-[inset_0_0_1px_1px_#bfe3f8]" : "border-[#b5b1ad] border-r-[#c2beba] border-b-[#c2beba]")
        }
      >
        {files?.map((f, i) => (
          <div key={f.name} className={"flex h-[17.800px] items-center gap-[7px] pl-[0.500px] " + (i % 2 ? "bg-[#f7f6f5]" : "bg-transparent")}>
            {f.music ? (
              <Icon className="h-[17.500px] w-[17.500px]">
                <Base small />
                <path d="M12 24v-15l13-3v15" fill="none" stroke="#2a6fd0" strokeWidth="3" />
                <circle cx="9.500" cy="24" r="3.800" fill="#2a6fd0" />
                <circle cx="22.500" cy="21" r="3.800" fill="#2a6fd0" />
              </Icon>
            ) : (
              <Icon className="h-[17.500px] w-[17.500px]">
                <Base small />
                <rect x="2.500" y="5" width="29" height="23" fill="url(#photo)" />
                <path d="M2.500 13c10-3 18 3 29-1v7c-10 4-18-1-29 2z" fill="#3aa0c8" opacity="0.750" />
              </Icon>
            )}
            <span className={f.track + (f.current ? " border-b border-[#222] leading-[13px]" : " leading-[17px]")}>{f.name}</span>
          </div>
        ))}
      </div>
    </div>
  );
}

const files: PoolFile[] = [
  { name: "incorrect.ogg", music: true, track: "tracking-[0.090px]" },
  { name: "regard_droite.png", track: "tracking-[0.180px]" },
  { name: "regard_gauche.png", track: "tracking-[0.050px]" },
  { name: "regard_neutre.png", track: "tracking-[0.150px]", current: true },
];

/* ---------- page ---------- */

export default function App() {
  return (
    <div className="relative h-[985px] w-[1565px] overflow-hidden bg-white font-['Noto_Sans',sans-serif] text-[14px] text-[#2b2b2b]">
      <Gradients />
      <div className="flex h-[44px] pl-[59px]">
        <span className="relative z-10 leading-[28px] text-[21px] tracking-[0.240px] whitespace-nowrap text-[#2e3436]">
          Ouvrez la fenêtre 'Groupe de fichiers' et ajoutez des fichiers dedans
        </span>
      </div>

      <div className="ml-[45px] flex h-[800px] w-[1382px] flex-col rounded-t-[4px] rounded-b-[3px] border border-b-[4px] border-[#eceaea] border-b-[#c3bbb8] bg-[#d6d2cf] shadow-[0_0_5px_3px_#8ad2fa,0_0_22px_6px_rgba(140,190,240,0.6)]">
        <div className="flex h-[52px] shrink-0 flex-col border-b border-[#bbb7b4] bg-linear-to-b from-[#e1e0de] to-[#d6d2cf]">
          <div className="flex h-[25px] items-center bg-[radial-gradient(ellipse_400px_60px_at_50%_0,#f6f6f5,transparent)] pr-[7px] pb-[1px] pl-[5px]">
            <Logo className="h-[18px] w-[18px]" />
            <div className="ml-[8px]"><RoundButton dot /></div>
            <span className="flex-1 pl-[26px] text-center tracking-[0.170px]">/home/lotje/formation2.opensesame.tar.gz [non enregistré]</span>
            <div className="flex gap-[8.500px]">
              <RoundButton d="M2.500 4.500l3.500 3 3.500-3" />
              <RoundButton d="M2.500 7.500l3.500-3 3.500 3" />
              <RoundButton d="M2.500 2.500l7 7M9.500 2.500l-7 7" />
            </div>
          </div>
          <div className="flex h-[26px] items-center pt-[3px] pl-[15px]">
            <span className="w-[66px] tracking-[0.060px]">Fichier</span>
            <span className="w-[81px] tracking-[0.260px]">Exécuter</span>
            <span className="w-[47px] tracking-[0.390px]">Vue</span>
            <span className="w-[61px] tracking-[0.150px]">Outils</span>
            <span className="tracking-[0.230px]">Aide</span>
          </div>
        </div>

        <div className="flex h-[50px] shrink-0 items-center gap-[3px] border-t border-b border-t-[#e8e6e5] border-b-[#bbb7b4] pl-[5.500px]">
          <Grip vertical className="mr-[-2px] h-[28px]" />
          <Tool name="new" />
          <Tool name="open" />
          <Tool name="save" />
          <ToolSep />
          <Tool name="run" />
          <Tool name="runWin" />
          <Tool name="quick" />
          <ToolSep />
          <Tool name="stamp" />
          <Tool name="star" pressed />
          <ToolSep />
          <Tool name="list" pressed />
          <Tool name="folder" pressed />
          <Tool name="find" />
          <Tool name="bug" />
        </div>

        <div className="flex h-[667px] shrink-0 border-t border-[#dedbd9]">
          <Palette />
          <Overview />
          <div className="flex w-[17px] shrink-0 pt-[311px] pl-[1px]"><Grip vertical className="h-[45px]" /></div>
          <Editor />
          <div className="flex w-[17px] shrink-0 justify-end pt-[311px] pr-[1px]"><Grip vertical className="h-[45px]" /></div>
          <div className="flex w-[438px] shrink-0 flex-col">
            <DockTitle>
              <span className="tracking-[0.060px]">Groupe de fichiers</span>
            </DockTitle>
            <div className="h-[645px]"><PoolPanel focusFolder className="pt-[8px] pb-[5px]" /></div>
          </div>
        </div>

        <div className="flex flex-1 items-center pt-[2px] pl-[3px] text-[12px]">
          <div className="flex h-[17px] w-[17px] items-center justify-center rounded-[2px] border border-[#b0aca9] bg-linear-to-b from-[#f0efee] to-[#d4d1ce]">
            <svg viewBox="0 0 14 14" className="h-[14px] w-[14px]"><path d="M1.500 6.500l4 4 7-7" fill="none" stroke="#3a3a3a" strokeWidth="2.600" /></svg>
          </div>
          <span className="ml-[7px] tracking-[0.100px]">Prêt</span>
        </div>
      </div>

      <div className="absolute top-[85px] left-[527px] h-[69px] w-[67px] rounded-[6px] border-[4px] border-[#fde74c] bg-[#fce94f]/30" />
      <div className="absolute top-[189px] left-[984px] h-[70px] w-[67px] rounded-[6px] border-[4px] border-[#fde74c] bg-[#fce94f]/30" />
      <svg viewBox="0 0 16 26" className="absolute top-[217px] left-[1018px] h-[26px] w-[16px]">
        <path d="M1.500 1.500l13 13.500-4 8.500-9-3z" fill="#f3ecae" stroke="#6d682c" strokeWidth="1.300" strokeLinejoin="round" />
      </svg>

      <span className="absolute top-[306px] left-[1121px] text-[21px] leading-[28px] tracking-[0.460px] text-[#2e3436]">Résultat</span>

      <div className="absolute top-[340px] left-[1128px] h-[645px] w-[437px] bg-[#d6d2cf]">
        <PoolPanel files={files} className="pt-[6.500px] pb-[7px]" />
      </div>
    </div>
  );
}
